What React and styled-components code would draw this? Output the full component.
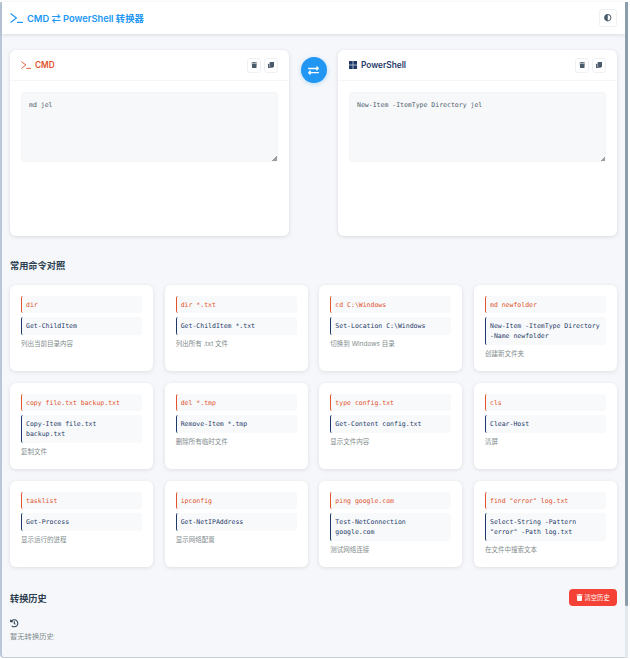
import React from "react";
import styled, { createGlobalStyle } from "styled-components";
import { FaTrash, FaClone, FaExchangeAlt, FaAdjust, FaHistory } from "react-icons/fa";

const Global = createGlobalStyle`
  html, body { margin: 0; padding: 0; height: 659px; overflow: hidden; background: #ffffff; }
  * { box-sizing: border-box; }
  #root { height: 659px; }
`;

const sans = `Inter, "Noto Sans CJK SC", sans-serif`;
const mono = `"DejaVu Sans Mono", "Noto Sans CJK SC", monospace`;

const Frame = styled.div`
  display: flex;
  height: 659px;
  background: #fff;
  padding: 2px 2px 1px 0;
  font-family: ${sans};
  color: #2c3e50;
`;
const Page = styled.div`
  flex: 1;
  min-width: 0;
  display: flex;
  flex-direction: column;
  background: #f5f7fa;
  border-left: 2px solid #b9c8d8;
  border-bottom: 1px solid #c9ced3;
  border-bottom-left-radius: 4px;
`;
const Scrollbar = styled.div`
  width: 3px;
  flex: none;
  background: #e0e7ed;
`;
const Thumb = styled.div`
  height: 604px;
  background: #8d9eab;
  border-radius: 0 0 1px 1px;
`;
const Header = styled.header`
  height: 32px;
  flex: none;
  display: flex;
  align-items: center;
  justify-content: space-between;
  padding: 0 8px;
  background: #fff;
  box-shadow: 0 1px 4px rgba(0, 0, 0, 0.12);
`;
const Title = styled.h1`
  display: flex;
  align-items: center;
  gap: 4px;
  margin: 0;
  font-size: 9.3px;
  font-weight: 600;
  color: #2196f3;
`;
const IconButton = styled.button`
  display: flex;
  align-items: center;
  justify-content: center;
  padding: 0;
  width: ${p => p.$size || 14.5}px;
  height: ${p => p.$size || 15}px;
  border: 1px solid #eef1f4;
  border-radius: 3px;
  background: #fff;
  color: #4a5b6b;
  font-size: ${p => p.$icon || 6.5}px;
`;
const Main = styled.main`
  flex: 1;
  min-height: 0;
  padding: 16px 8px 0;
`;
const Converter = styled.section`
  display: grid;
  grid-template-columns: 279px 1fr 279px;
  height: 186px;
`;
const SwapColumn = styled.div`
  display: flex;
  justify-content: center;
  padding-top: 7px;
`;
const SwapButton = styled.button`
  width: 26px;
  height: 26px;
  padding: 0;
  border: 0;
  border-radius: 50%;
  background: #2196f3;
  color: #fff;
  display: flex;
  align-items: center;
  justify-content: center;
  font-size: 11px;
  box-shadow: 0 1px 4px rgba(33, 150, 243, 0.3);
`;
const Panel = styled.div`
  background: #fff;
  border-radius: 6px;
  box-shadow: 0 1px 4px rgba(0, 0, 0, 0.12);
  display: flex;
  flex-direction: column;
`;
const PanelHead = styled.div`
  height: 31px;
  display: flex;
  align-items: center;
  justify-content: space-between;
  padding: 0 11px;
  border-bottom: 1px solid #f3f5f7;
`;
const PanelTitle = styled.div`
  display: flex;
  align-items: center;
  gap: 4px;
  font-size: 8.3px;
  font-weight: 600;
  color: ${p => p.$color};
`;
const Actions = styled.div`
  display: flex;
  gap: 2.5px;
`;
const PanelBody = styled.div`
  padding: 11px;
`;
const Editor = styled.textarea`
  display: block;
  width: 257px;
  height: 70px;
  padding: 7px;
  border: 1px solid #f3f5f8;
  border-radius: 4px;
  background: #f7f8fa;
  color: #4d5d6c;
  font-family: ${mono};
  font-size: 6.5px;
  line-height: 1.6;
  outline: none;
  resize: vertical;
  &::-webkit-resizer {
    background: linear-gradient(135deg, transparent 50%, #9aa0a6 50%) right bottom / 5px 5px no-repeat;
  }
`;
const SectionTitle = styled.h2`
  margin: 0;
  font-size: 9.2px;
  font-weight: 600;
  color: #2c3e50;
`;
const CommonTitle = styled(SectionTitle)`
  margin: 24px 0 14px;
  line-height: 11px;
`;
const Grid = styled.section`
  display: grid;
  grid-template-columns: repeat(4, 143px);
  grid-auto-rows: 86px;
  justify-content: space-between;
  row-gap: 12px;
`;
const Card = styled.article`
  background: #fff;
  border-radius: 6px;
  box-shadow: 0 1px 4px rgba(0, 0, 0, 0.1);
  padding: 11px;
`;
const Code = styled.div`
  margin-bottom: 4px;
  padding: 3.5px 3.5px 3.5px 4px;
  background: #f8f9fb;
  border-left: 1.5px solid ${p => p.$color};
  border-radius: 2px;
  color: ${p => p.$color};
  font-family: ${mono};
  font-size: 6.5px;
  line-height: 10.3px;
  white-space: pre-wrap;
`;
const Desc = styled.div`
  font-size: 6.5px;
  line-height: 10px;
  color: #7f8c8d;
`;
const HistoryHead = styled.div`
  display: flex;
  align-items: center;
  justify-content: space-between;
  margin-top: 22px;
  height: 17px;
`;
const ClearButton = styled.button`
  display: flex;
  align-items: center;
  gap: 1.5px;
  height: 17px;
  width: 48px;
  padding: 0 0 0 7px;
  border: 0;
  border-radius: 4px;
  background: #f44336;
  color: #fff;
  font-family: ${sans};
  font-size: 6.3px;
`;
const Empty = styled.div`
  margin-top: 13px;
  font-size: 7.3px;
  line-height: 11px;
  color: #7f8c8d;
`;
const EmptyIcon = styled.div`
  font-size: 8.5px;
  line-height: 9px;
  color: #2c3e50;
  margin-bottom: 1px;
`;

const CMD = "#e0532b";
const PS = "#1f3a68";

function PromptIcon({ w, h }) {
  return (
    <svg width={w} height={h} viewBox="0 0 13 10" fill="none" stroke="currentColor" strokeWidth="1.2">
      <path d="M0.6 0.6 L6.4 5 L0.6 9.4" />
      <path d="M7 9.4 H13" />
    </svg>
  );
}

function WindowsTiles() {
  return (
    <svg width="8" height="8" viewBox="0 0 8 8" fill="currentColor">
      <rect x="0" y="0" width="3.7" height="3.7" />
      <rect x="4.3" y="0" width="3.7" height="3.7" />
      <rect x="0" y="4.3" width="3.7" height="3.7" />
      <rect x="4.3" y="4.3" width="3.7" height="3.7" />
    </svg>
  );
}

const commands = [
  ["dir", "Get-ChildItem", "列出当前目录内容"],
  ["dir *.txt", "Get-ChildItem *.txt", "列出所有 .txt 文件"],
  ["cd C:\\Windows", "Set-Location C:\\Windows", "切换到 Windows 目录"],
  ["md newfolder", "New-Item -ItemType Directory -Name newfolder", "创建新文件夹"],
  ["copy file.txt backup.txt", "Copy-Item file.txt backup.txt", "复制文件"],
  ["del *.tmp", "Remove-Item *.tmp", "删除所有临时文件"],
  ["type config.txt", "Get-Content config.txt", "显示文件内容"],
  ["cls", "Clear-Host", "清屏"],
  ["tasklist", "Get-Process", "显示运行的进程"],
  ["ipconfig", "Get-NetIPAddress", "显示网络配置"],
  ["ping google.com", "Test-NetConnection google.com", "测试网络连接"],
  ['find "error" log.txt', 'Select-String -Pattern "error" -Path log.txt', "在文件中搜索文本"],
];

function ConverterPanel({ icon, title, color, value }) {
  return (
    <Panel>
      <PanelHead>
        <PanelTitle $color={color}>{icon}{title}</PanelTitle>
        <Actions>
          <IconButton><FaTrash /></IconButton>
          <IconButton><FaClone /></IconButton>
        </Actions>
      </PanelHead>
      <PanelBody>
        <Editor readOnly value={value} />
      </PanelBody>
    </Panel>
  );
}

export default function App() {
  return (
    <Frame>
      <Global />
      <Page>
        <Header>
          <Title><PromptIcon w={13} h={10} />CMD ⇄ PowerShell 转换器</Title>
          <IconButton $size={18} $icon={7.5}><FaAdjust /></IconButton>
        </Header>
        <Main>
          <Converter>
            <ConverterPanel icon={<PromptIcon w={10} h={8} />} title="CMD" color={CMD} value="md jel" />
            <SwapColumn><SwapButton><FaExchangeAlt /></SwapButton></SwapColumn>
            <ConverterPanel icon={<WindowsTiles />} title="PowerShell" color={PS} value="New-Item -ItemType Directory jel" />
          </Converter>
          <CommonTitle>常用命令对照</CommonTitle>
          <Grid>
            {commands.map(([a, b, c]) => (
              <Card key={a}>
                <Code $color={CMD}>{a}</Code>
                <Code $color={PS}>{b}</Code>
                <Desc>{c}</Desc>
              </Card>
            ))}
          </Grid>
          <HistoryHead>
            <SectionTitle>转换历史</SectionTitle>
            <ClearButton><FaTrash size={7} />清空历史</ClearButton>
          </HistoryHead>
          <Empty>
            <EmptyIcon><FaHistory /></EmptyIcon>
            暂无转换历史
          </Empty>
        </Main>
      </Page>
      <Scrollbar><Thumb /></Scrollbar>
    </Frame>
  );
}
